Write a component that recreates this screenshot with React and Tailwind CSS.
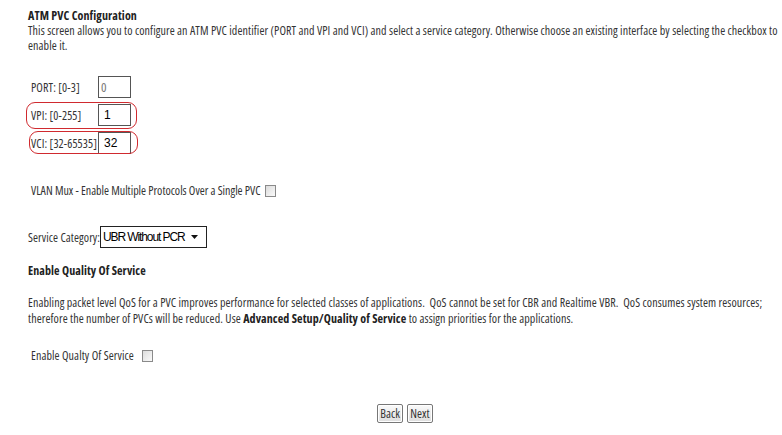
import React from 'react';

const base = 'font-["Open_Sans",sans-serif] font-stretch-condensed text-[12px] tracking-[0.1px] text-[#333]';

function Checkbox() {
  return (
    <span className="inline-block w-[11px] h-[12px] border border-[#8a8a8a] bg-gradient-to-br from-[#dcdcdc] to-[#fafafa] align-middle" />
  );
}

function Field({ label, value, dim, oval }) {
  return (
    <div className="relative flex items-center h-[22px]">
      {oval && (
        <span className={`absolute ${oval} rounded-[9px] border-[1.5px] border-[#d02a2f]`} />
      )}
      <span className="w-[70px] pl-[3px] whitespace-nowrap">{label}</span>
      <span
        className={`flex items-center w-[33px] h-[22px] border border-[#555] bg-white pl-[2px] font-["Liberation_Sans",sans-serif] text-[12px] tracking-normal ${
          dim ? 'text-[#777] font-["Open_Sans",sans-serif] font-stretch-condensed text-[13px]' : 'text-black pl-[5px]'
        }`}
      >
        {value}
      </span>
    </div>
  );
}

export default function App() {
  return (
    <div className={`${base} w-[782px] h-[435px] bg-white pl-[28px] leading-[15px] overflow-hidden`}>
      <div className="pt-[8px] font-bold text-[#222]">ATM PVC Configuration</div>
      <div className="whitespace-nowrap">
        This screen allows you to configure an ATM PVC identifier (PORT and VPI and VCI) and select a service category. Otherwise choose an existing interface by selecting the checkbox to
        <br />
        enable it.
      </div>

      <div className="mt-[23px] flex flex-col gap-[6px]">
        <Field label="PORT: [0-3]" value="0" dim />
        <Field label="VPI: [0-255]" value="1" oval="-left-[2px] -top-[2px] w-[111px] h-[27px]" />
        <Field label="VCI: [32-65535]" value="32" oval="left-[1px] -top-[1px] w-[109px] h-[23px]" />
      </div>

      <div className="mt-[29px] pl-[3px] flex items-center gap-[4px] h-[15px] tracking-[0px]">
        <span>VLAN Mux - Enable Multiple Protocols Over a Single PVC</span>
        <Checkbox />
      </div>

      <div className="mt-[28px] flex items-center h-[22px]">
        <span className="w-[72px] whitespace-nowrap">Service Category:</span>
        <span className="flex items-center justify-between w-[107px] h-[22px] border border-[#222] bg-white pl-[2px] pr-[8px] font-['Liberation_Sans',sans-serif] text-[12px] tracking-[-1.1px] text-black whitespace-nowrap">
          UBR Without PCR
          <svg width="7" height="4" viewBox="0 0 7 4"><path d="M0 0h7L3.5 4z" fill="#111" /></svg>
        </span>
      </div>

      <div className="mt-[15px] font-bold text-[#222]">Enable Quality Of Service</div>

      <div className="mt-[17px] whitespace-nowrap leading-[16px]">
        Enabling packet level QoS for a PVC improves performance for selected classes of applications.&nbsp; QoS cannot be set for CBR and Realtime VBR.&nbsp; QoS consumes system resources;
        <br />
        therefore the number of PVCs will be reduced. Use <b className="text-[#222]">Advanced Setup/Quality of Service</b> to assign priorities for the applications.
      </div>

      <div className="mt-[21px] pl-[3px] flex items-center gap-[8px] h-[15px]">
        <span>Enable Qualty Of Service</span>
        <Checkbox />
      </div>

      <div className="mt-[41px] flex justify-center gap-[4px]">
        <button className="h-[19px] px-[2px] border border-[#777] rounded-[2px] bg-gradient-to-b from-[#fafafa] to-[#dedede] text-[#333] leading-[15px] shadow-[inset_0_0_0_1px_#fff]">
          Back
        </button>
        <button className="h-[19px] px-[2px] border border-[#777] rounded-[2px] bg-gradient-to-b from-[#fafafa] to-[#dedede] text-[#333] leading-[15px] shadow-[inset_0_0_0_1px_#fff]">
          Next
        </button>
      </div>
    </div>
  );
}
